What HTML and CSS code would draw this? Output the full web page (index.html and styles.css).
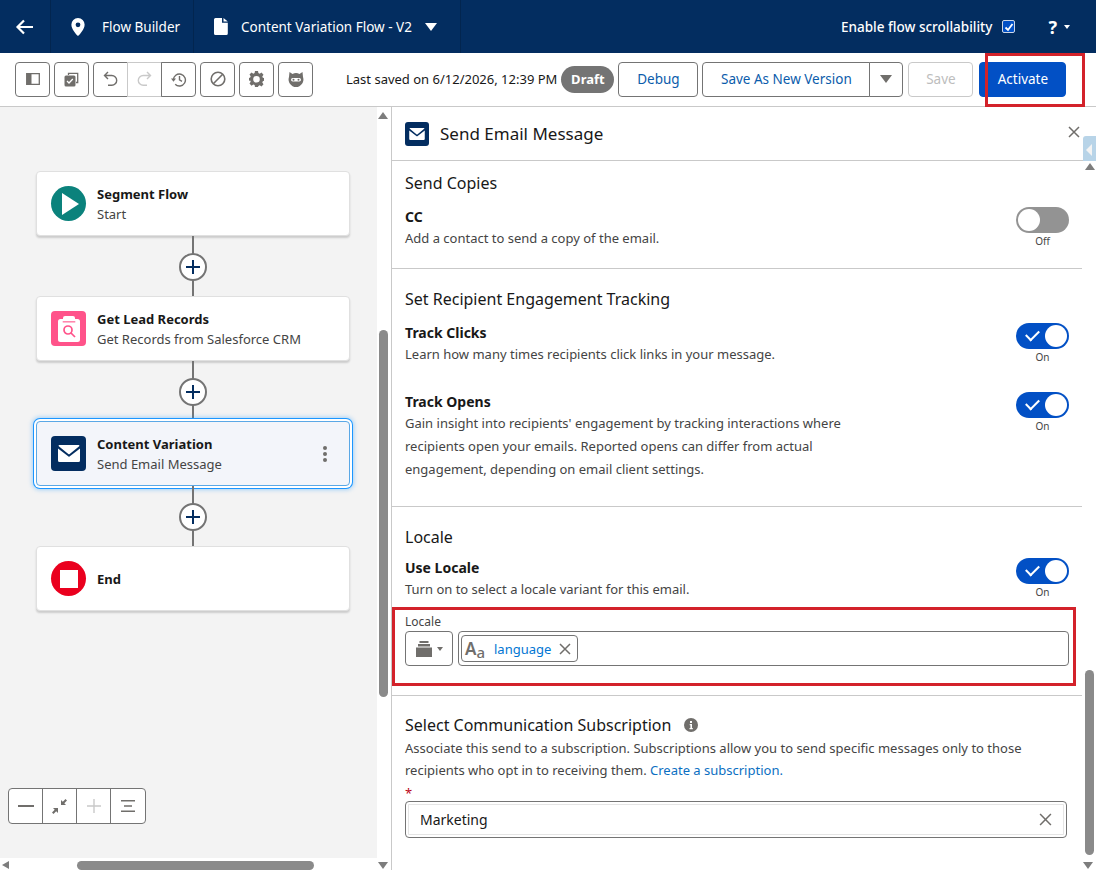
FILE: index.html
```html
<!DOCTYPE html>
<html lang="en">
<head>
  <meta charset="UTF-8">
  <title>Flow Builder</title>
  <link rel="stylesheet" href="styles.css">
</head>
<body>
  <header class="topbar">
    <div class="nav-cell nav-back">
      <svg width="20" height="20" viewBox="0 0 20 20" fill="none" stroke="#fff" stroke-width="2.2"><path d="M18 10H2.5M9 3.5 2.5 10 9 16.5"/></svg>
    </div>
    <div class="nav-cell nav-app">
      <svg width="14" height="18" viewBox="0 0 14 18"><path fill="#fff" fill-rule="evenodd" d="M7 0a6.6 6.6 0 0 0-6.6 6.7C.4 11 5 16.200 7 18c2-1.800 6.600-7 6.600-11.300A6.600 6.600 0 0 0 7 0Zm0 4.400a2.400 2.400 0 1 1 0 4.800 2.400 2.400 0 0 1 0-4.800Z"/></svg>
      <span>Flow Builder</span>
    </div>
    <div class="nav-cell nav-doc">
      <svg width="14" height="17" viewBox="0 0 14 17"><path fill="#fff" d="M1.500 0H8v4.800h5.800V15.500a1.500 1.500 0 0 1-1.500 1.500H1.500A1.500 1.500 0 0 1 0 15.500v-14A1.500 1.500 0 0 1 1.500 0ZM9.500 0l4.300 3.400H9.500Z"/></svg>
      <span>Content Variation Flow - V2</span>
      <i class="caret caret-white"></i>
    </div>
    <div class="nav-right">
      <span class="scroll-label">Enable flow scrollability</span>
      <span class="checkbox">
        <svg width="10" height="10" viewBox="0 0 10 10" fill="none" stroke="#fff" stroke-width="1.800"><path d="M1.500 5.500 4 8l4.500-6"/></svg>
      </span>
      <span class="help">?</span>
      <i class="caret caret-small"></i>
    </div>
  </header>

  <div class="toolbar">
    <button class="tool">
      <svg width="14" height="12" viewBox="0 0 14 12"><path fill="none" stroke="#706e6b" stroke-width="1.300" d="M.7.700h12.600v10.600H.7z"/><path fill="#706e6b" d="M1 1h4.500v10H1z"/></svg>
    </button>
    <button class="tool">
      <svg width="15" height="15" viewBox="0 0 15 15"><path fill="none" stroke="#706e6b" stroke-width="1.300" d="M4.500 3V1.300h9.200v9.200H12"/><rect x=".5" y="3.500" width="11" height="11" rx="1.500" fill="#706e6b"/><path fill="none" stroke="#fff" stroke-width="1.300" d="m3 9 2 2 3.800-4"/></svg>
    </button>
    <div class="tool-group">
      <button class="tool">
        <svg width="15" height="16" viewBox="0 0 15 16" fill="none" stroke="#706e6b" stroke-width="1.400"><path d="M5 1 1.500 4.500 5 8M1.500 4.500h7.300a4.800 4.800 0 0 1 0 9.800H5"/></svg>
      </button>
      <button class="tool tool-off">
        <svg width="15" height="16" viewBox="0 0 15 16" fill="none" stroke="#c9c9c9" stroke-width="1.400"><path d="M10 1l3.500 3.500L10 8M13.500 4.500H6.200a4.800 4.800 0 0 0 0 9.800H10"/></svg>
      </button>
      <button class="tool">
        <svg width="16" height="15" viewBox="0 0 16 15" fill="none" stroke="#706e6b" stroke-width="1.400"><path d="M2.400 8a6 6 0 1 1 1.800 4.300"/><path d="M8.500 4v3.800l2.500 1.500"/><path fill="#706e6b" stroke="none" d="M0 6.500h5L2.500 9.800z"/></svg>
      </button>
    </div>
    <button class="tool">
      <svg width="16" height="16" viewBox="0 0 16 16" fill="none" stroke="#706e6b" stroke-width="1.600"><circle cx="8" cy="8" r="6.800"/><path d="M3.300 12.700 12.700 3.300"/></svg>
    </button>
    <button class="tool">
      <svg width="15" height="16" viewBox="0 0 15 16"><path fill="#706e6b" fill-rule="evenodd" d="M6 0h3l.4 2.100 1.300.6L12.500 1.500l2 2.200-1.200 1.800.5 1.300L15 7v2.800l-1.200.4-.5 1.300 1.200 1.800-2 2.200-1.800-1.200-1.300.6L9 16H6l-.4-1.900-1.300-.6-1.800 1.200-2-2.200 1.200-1.800-.5-1.300L0 9.800V7l1.200-.4.500-1.300L.5 3.500l2-2L4.300 2.700l1.300-.6ZM7.500 5a3.300 3.300 0 1 0 0 6.600 3.300 3.300 0 0 0 0-6.600Z"/></svg>
    </button>
    <button class="tool">
      <svg width="16" height="15" viewBox="0 0 16 15"><path fill="#706e6b" d="M1.500 0 4.500 2A7.500 7.500 0 0 1 11.500 2L14.500 0l.5 5A7.500 7.500 0 0 1 8 15 7.500 7.500 0 0 1 1 5Z"/><rect x="3" y="6" width="10" height="3.500" rx="1.700" fill="#fff"/><circle cx="5.500" cy="7.700" r="1" fill="#706e6b"/><circle cx="10.500" cy="7.700" r="1" fill="#706e6b"/></svg>
    </button>

    <span class="last-saved">Last saved on 6/12/2026, 12:39 PM</span>
    <span class="draft-pill">Draft</span>
    <button class="btn btn-debug">Debug</button>
    <div class="btn-split">
      <button class="btn btn-version">Save As New Version</button>
      <button class="btn btn-more"><i class="caret caret-grey"></i></button>
    </div>
    <button class="btn btn-save">Save</button>
    <button class="btn btn-activate">Activate</button>
  </div>

  <main class="workspace">
    <section class="canvas">
      <div class="canvas-area">
        <div class="flow">
          <div class="node">
            <span class="node-icon icon-start">
              <svg width="18" height="22" viewBox="0 0 18 22"><path fill="#fff" d="M1 0v22l17-11z"/></svg>
            </span>
            <div class="node-text">
              <div class="node-title">Segment Flow</div>
              <div class="node-sub">Start</div>
            </div>
          </div>
          <div class="connector"><span class="add-btn"></span></div>
          <div class="node">
            <span class="node-icon icon-get">
              <svg width="22" height="26" viewBox="0 0 22 26"><path fill="#fff" fill-rule="evenodd" d="M7 0h8a2 2 0 0 1 2 2v1h2.500A2.500 2.500 0 0 1 22 5.500v18a2.500 2.500 0 0 1-2.500 2.500h-17A2.500 2.500 0 0 1 0 23.500v-18A2.500 2.500 0 0 1 2.500 3H5V2a2 2 0 0 1 2-2Z"/><path fill="#ff538a" d="M4.700 5.300h12.600v1.100H4.700z"/><g fill="none" stroke="#ff538a" stroke-width="1.700"><circle cx="10" cy="14" r="4"/><path d="m13 17 4 4"/></g></svg>
            </span>
            <div class="node-text">
              <div class="node-title">Get Lead Records</div>
              <div class="node-sub">Get Records from Salesforce CRM</div>
            </div>
          </div>
          <div class="connector"><span class="add-btn"></span></div>
          <div class="node node-active">
            <span class="node-icon icon-mail">
              <svg width="22" height="17" viewBox="0 0 22 17"><path fill="#fff" d="M0 3.400V15.500A1.500 1.500 0 0 0 1.500 17h19a1.500 1.500 0 0 0 1.500-1.500V3.400L11.500 11.600a.8.800 0 0 1-1 0Z"/><path fill="#fff" d="M1.300 0h19.400c.7 0 1 .8.500 1.200L11.400 9.200a.7.700 0 0 1-.8 0L.8 1.200C.3.800.600 0 1.300 0Z"/></svg>
            </span>
            <div class="node-text">
              <div class="node-title">Content Variation</div>
              <div class="node-sub">Send Email Message</div>
            </div>
            <span class="kebab"><i></i><i></i><i></i></span>
          </div>
          <div class="connector"><span class="add-btn"></span></div>
          <div class="node">
            <span class="node-icon icon-end"><i></i></span>
            <div class="node-text">
              <div class="node-title">End</div>
            </div>
          </div>
        </div>
        <div class="zoom-ctrl">
          <button class="zoom-btn"><svg width="16" height="2" viewBox="0 0 16 2"><path fill="#706e6b" d="M0 0h16v2H0z"/></svg></button>
          <button class="zoom-btn"><svg width="15" height="15" viewBox="0 0 15 15"><path fill="#706e6b" d="M9 1v5h5L12.300 4.300 15 1.500 13.500 0l-2.700 2.700ZM6 14V9H1l1.700 1.700L0 13.500 1.500 15l2.700-2.700Z"/></svg></button>
          <button class="zoom-btn zoom-off"><svg width="14" height="14" viewBox="0 0 14 14"><path fill="#c9c9c9" d="M6.300 0h1.400v6.300H14v1.400H7.700V14H6.300V7.700H0V6.300h6.300z"/></svg></button>
          <button class="zoom-btn"><svg width="14" height="12" viewBox="0 0 14 12"><path fill="#706e6b" d="M0 0h14v1.600H0zM3 5.200h8v1.600H3zM0 10.400h14V12H0z"/></svg></button>
        </div>
      </div>
      <div class="v-scroll"><i class="arrow-up"></i><span class="v-thumb"></span></div>
      <div class="h-scroll"><i class="arrow-left"></i><span class="h-thumb"></span><i class="arrow-down"></i></div>
    </section>

    <section class="panel">
      <div class="panel-head">
        <span class="panel-icon">
          <svg width="16" height="12" viewBox="0 0 22 17"><path fill="#fff" d="M0 3.400V15.500A1.500 1.500 0 0 0 1.500 17h19a1.500 1.500 0 0 0 1.500-1.500V3.400L11.500 11.600a.8.800 0 0 1-1 0Z"/><path fill="#fff" d="M1.300 0h19.400c.7 0 1 .8.500 1.200L11.400 9.200a.7.700 0 0 1-.8 0L.8 1.200C.3.800.600 0 1.300 0Z"/></svg>
        </span>
        <h1 class="panel-title">Send Email Message</h1>
        <svg class="panel-close" width="12" height="12" viewBox="0 0 12 12" fill="none" stroke="#706e6b" stroke-width="1.500"><path d="m1 1 10 10M11 1 1 11"/></svg>
      </div>
      <div class="panel-tab"><i></i></div>

      <div class="panel-body">
        <div class="group group-copies">
          <h2 class="group-title">Send Copies</h2>
          <div class="opt opt-cc">
            <div class="opt-text">
              <div class="opt-title">CC</div>
              <p class="opt-desc">Add a contact to send a copy of the email.</p>
            </div>
            <div class="toggle-wrap"><span class="toggle"></span><span class="toggle-label">Off</span></div>
          </div>
        </div>

        <div class="group group-tracking">
          <h2 class="group-title">Set Recipient Engagement Tracking</h2>
          <div class="opt opt-clicks">
            <div class="opt-text">
              <div class="opt-title">Track Clicks</div>
              <p class="opt-desc">Learn how many times recipients click links in your message.</p>
            </div>
            <div class="toggle-wrap"><span class="toggle toggle-on"></span><span class="toggle-label">On</span></div>
          </div>
          <div class="opt opt-opens">
            <div class="opt-text">
              <div class="opt-title">Track Opens</div>
              <p class="opt-desc opt-desc-wrap">Gain insight into recipients' engagement by tracking interactions where recipients open your emails. Reported opens can differ from actual engagement, depending on email client settings.</p>
            </div>
            <div class="toggle-wrap"><span class="toggle toggle-on"></span><span class="toggle-label">On</span></div>
          </div>
        </div>

        <div class="group group-locale">
          <h2 class="group-title">Locale</h2>
          <div class="opt opt-locale">
            <div class="opt-text">
              <div class="opt-title">Use Locale</div>
              <p class="opt-desc">Turn on to select a locale variant for this email.</p>
            </div>
            <div class="toggle-wrap"><span class="toggle toggle-on"></span><span class="toggle-label">On</span></div>
          </div>
          <div class="locale-field">
            <div class="field-label">Locale</div>
            <div class="locale-row">
              <button class="res-picker">
                <svg width="16" height="16" viewBox="0 0 16 16"><path fill="#706e6b" d="M3.500 0h9v2h-9zM2 3h12v2.500H2zM0 6.500h16V16H0z"/></svg>
                <i class="caret caret-tiny"></i>
              </button>
              <div class="pill-input">
                <span class="pill">
                  <span class="pill-glyph"><b>A</b><em>a</em></span>
                  <a class="pill-text">language</a>
                  <svg width="12" height="12" viewBox="0 0 12 12" fill="none" stroke="#706e6b" stroke-width="1.500"><path d="m1 1 10 10M11 1 1 11"/></svg>
                </span>
              </div>
            </div>
          </div>
        </div>

        <div class="group group-sub">
          <h2 class="group-title">Select Communication Subscription
            <svg class="info" width="14" height="14" viewBox="0 0 14 14"><circle cx="7" cy="7" r="7" fill="#706e6b"/><path fill="#fff" d="M6 3h2v2H6zM5.700 6h2.300v4h.8v1.200H5.500V10h.9V7.200h-.7z"/></svg>
          </h2>
          <p class="opt-desc sub-desc">Associate this send to a subscription. Subscriptions allow you to send specific messages only to those recipients who opt in to receiving them. <a class="link">Create a subscription.</a></p>
          <div class="required">*</div>
          <div class="text-input">
            <span>Marketing</span>
            <svg width="13" height="13" viewBox="0 0 12 12" fill="none" stroke="#706e6b" stroke-width="1.400"><path d="m1 1 10 10M11 1 1 11"/></svg>
          </div>
        </div>
      </div>
      <div class="panel-scroll"><i class="arrow-up"></i><span class="panel-thumb"></span><i class="arrow-down"></i></div>
    </section>
  </main>

  <!-- red callouts drawn over the screenshot -->
  <div class="callout callout-activate"></div>
  <div class="callout callout-locale"></div>
</body>
</html>
```

FILE: styles.css
```css
:root {
  --navy: #032d60;
  --blue: #0b5cab;
  --brand: #0250c5;
  --link: #0176d3;
  --border: #747474;
  --line: #c9c9c9;
  --icon: #706e6b;
  --text: #181818;
  --muted: #444444;
  --font-family: "Noto Sans", "Open Sans", Arial, sans-serif;
}

* {
  margin: 0;
  padding: 0;
  box-sizing: border-box;
}

html, body {
  width: 1096px;
  height: 870px;
  overflow: hidden;
}

body {
  position: relative;
  display: flex;
  flex-direction: column;
  font-family: var(--font-family);
  font-size: 13px;
  color: var(--text);
  background: #fff;
}

button {
  font-family: inherit;
  background: #fff;
  cursor: pointer;
}

.caret {
  display: block;
  width: 0;
  height: 0;
  border-style: solid;
  border-color: transparent;
}

.caret-white {
  border-width: 8px 6.500px 0;
  border-top-color: #fff;
  margin-left: 13px;
}

.caret-small {
  border-width: 4px 3.500px 0;
  border-top-color: #fff;
  margin-left: 7px;
}

.caret-grey {
  border-width: 8px 6px 0;
  border-top-color: var(--icon);
}

.caret-tiny {
  border-width: 4px 3.500px 0;
  border-top-color: var(--icon);
}

/* top bar */
.topbar {
  display: flex;
  align-items: stretch;
  flex: none;
  height: 53px;
  background: var(--navy);
  color: #fff;
  font-size: 13.500px;
}

.nav-cell {
  display: flex;
  align-items: center;
  border-right: 1px solid #02254f;
}

.nav-back {
  width: 51px;
  padding-left: 15px;
}

.nav-app {
  width: 143px;
  padding-left: 20px;
  gap: 17px;
}

.nav-doc {
  width: 267px;
  padding-left: 20px;
  gap: 13px;
}

.nav-doc .caret {
  margin-left: 0;
}

.nav-right {
  display: flex;
  align-items: center;
  margin-left: auto;
  padding-right: 26px;
}

.scroll-label {
  font-weight: 500;
  font-size: 13.500px;
}

.checkbox {
  display: flex;
  align-items: center;
  justify-content: center;
  width: 13px;
  height: 13px;
  margin-left: 10px;
  background: var(--brand);
  border: 1px solid #cfd8e6;
  border-radius: 2px;
}

.help {
  margin-left: 33px;
  font-size: 18px;
  font-weight: 700;
}

/* tool bar */
.toolbar {
  display: flex;
  align-items: center;
  flex: none;
  height: 54px;
  padding: 0 0 1px 15px;
  border-bottom: 1px solid var(--line);
  background: #fff;
}

.tool {
  display: flex;
  align-items: center;
  justify-content: center;
  width: 35px;
  height: 35px;
  margin-right: 4px;
  border: 1px solid var(--border);
  border-radius: 4px;
}

.tool-group {
  display: flex;
  margin-right: 4px;
}

.tool-group .tool {
  width: 35px;
  margin: 0 -1px 0 0;
  border-radius: 0;
}

.tool-group .tool:first-child {
  border-radius: 4px 0 0 4px;
}

.tool-group .tool:last-child {
  margin-right: 0;
  border-radius: 0 4px 4px 0;
}

.tool-group .tool-off {
  border-color: var(--line);
  border-left-color: var(--line);
  border-right-color: var(--border);
}

.last-saved {
  margin-left: 29px;
  font-size: 13px;
  color: var(--text);
  white-space: nowrap;
}

.draft-pill {
  display: flex;
  align-items: center;
  justify-content: center;
  width: 53px;
  height: 27px;
  margin-left: 4px;
  border-radius: 14px;
  background: #747474;
  color: #fff;
  font-size: 13px;
  font-weight: 700;
}

.btn {
  height: 35px;
  border: 1px solid var(--border);
  border-radius: 4px;
  font-size: 13.500px;
  color: var(--blue);
}

.btn-debug {
  width: 80px;
  margin-left: 4px;
}

.btn-split {
  display: flex;
  margin-left: 4px;
}

.btn-version {
  width: 168px;
  border-radius: 4px 0 0 4px;
}

.btn-more {
  display: flex;
  align-items: center;
  justify-content: center;
  width: 34px;
  margin-left: -1px;
  border-radius: 0 4px 4px 0;
}

.btn-save {
  width: 65px;
  margin-left: 5px;
  border-color: var(--line);
  color: #bdbdbd;
}

.btn-activate {
  width: 87px;
  margin-left: 6px;
  border-color: var(--brand);
  background: var(--brand);
  color: #fff;
}

/* layout below the bars */
.workspace {
  display: flex;
  flex: 1;
  min-height: 0;
}

.canvas {
  position: relative;
  flex: none;
  width: 392px;
  border-right: 1px solid var(--line);
  background: #fff;
}

.canvas-area {
  position: relative;
  width: 377px;
  height: 751px;
  padding: 64px 0 0 36px;
  background: #f3f3f3;
}

.flow {
  display: flex;
  flex-direction: column;
  width: 314px;
}

.node {
  display: flex;
  align-items: center;
  gap: 11px;
  height: 65px;
  padding: 0 14px;
  background: #fff;
  border: 1px solid #e0e0e0;
  border-radius: 4px;
  box-shadow: 0 2px 2px rgba(0, 0, 0, 0.16);
}

.node-active {
  position: relative;
  background: #f3f5fa;
  border: 1px solid #5aa8e6;
  box-shadow: 0 0 0 2px #fff, 0 0 0 3px #1b96ff, 0 0 4px 4px rgba(27, 150, 255, 0.35);
}

.node-icon {
  display: flex;
  align-items: center;
  justify-content: center;
  flex: none;
  width: 35px;
  height: 35px;
  border-radius: 4px;
}

.icon-start {
  border-radius: 50%;
  background: #0b827c;
}

.icon-start svg {
  margin-left: 3px;
}

.icon-get {
  background: #ff538a;
}

.icon-mail {
  background: var(--navy);
}

.icon-end {
  border-radius: 50%;
  background: #ea001e;
}

.icon-end i {
  width: 18px;
  height: 18px;
  background: #fff;
}

.node-title {
  font-size: 13px;
  font-weight: 700;
  line-height: 20px;
}

.node-sub {
  font-size: 13px;
  line-height: 20px;
  color: var(--muted);
}

.kebab {
  display: flex;
  flex-direction: column;
  gap: 2px;
  margin-left: auto;
  margin-right: 8px;
}

.kebab i {
  width: 4px;
  height: 4px;
  border-radius: 50%;
  background: var(--icon);
}

.connector {
  position: relative;
  align-self: center;
  width: 2px;
  height: 60px;
  background: #747474;
}

.add-btn {
  position: absolute;
  top: 17px;
  left: -13px;
  width: 28px;
  height: 28px;
  border: 2px solid #747474;
  border-radius: 50%;
  background: #fff;
}

.add-btn::before,
.add-btn::after {
  content: "";
  position: absolute;
  background: var(--navy);
}

.add-btn::before {
  top: 5px;
  left: 11px;
  width: 2px;
  height: 14px;
}

.add-btn::after {
  top: 11px;
  left: 5px;
  width: 14px;
  height: 2px;
}

.zoom-ctrl {
  position: absolute;
  left: 8px;
  bottom: 34px;
  display: flex;
  height: 36px;
  border: 1px solid var(--border);
  border-radius: 4px;
  background: #fff;
}

.zoom-btn {
  display: flex;
  align-items: center;
  justify-content: center;
  width: 34px;
  border: 0;
  border-right: 1px solid var(--border);
  background: transparent;
}

.zoom-btn:last-child {
  border-right: 0;
}

.zoom-off {
  border-right-color: var(--border);
}

.v-scroll {
  position: absolute;
  top: 0;
  right: 0;
  width: 14px;
  height: 751px;
  background: #fff;
}

.v-thumb {
  position: absolute;
  top: 223px;
  left: 2px;
  width: 9px;
  height: 367px;
  border-radius: 5px;
  background: #8a8a8a;
}

.arrow-up {
  position: absolute;
  top: 5px;
  left: 1px;
  width: 0;
  height: 0;
  border: solid transparent;
  border-width: 0 5px 7px;
  border-bottom-color: #7d7d7d;
}

.h-scroll {
  position: relative;
  width: 391px;
  height: 12px;
}

.h-thumb {
  position: absolute;
  top: 3px;
  left: 77px;
  width: 237px;
  height: 9px;
  border-radius: 5px;
  background: #8a8a8a;
}

.arrow-left {
  position: absolute;
  top: 3px;
  left: 2px;
  width: 0;
  height: 0;
  border: solid transparent;
  border-width: 4px 7px 4px 0;
  border-right-color: #7d7d7d;
}

.arrow-down {
  position: absolute;
  bottom: 1px;
  right: 3px;
  width: 0;
  height: 0;
  border: solid transparent;
  border-width: 7px 5px 0;
  border-top-color: #7d7d7d;
}

/* right hand panel */
.panel {
  position: relative;
  flex: 1;
  min-width: 0;
}

.panel-head {
  display: flex;
  align-items: center;
  gap: 11px;
  width: 100%;
  height: 54px;
  padding: 0 0 0 13px;
  border-bottom: 1px solid var(--line);
}

.panel-icon {
  display: flex;
  align-items: center;
  justify-content: center;
  width: 24px;
  height: 24px;
  border-radius: 3px;
  background: var(--navy);
}

.panel-title {
  font-size: 17px;
  font-weight: 400;
}

.panel-close {
  position: absolute;
  top: 19px;
  right: 16px;
}

.panel-tab {
  position: absolute;
  top: 29px;
  right: 0;
  width: 13px;
  height: 29px;
  border-radius: 3px 0 0 3px;
  background: #b8d4e8;
}

.panel-tab i {
  position: absolute;
  top: 8px;
  left: 3px;
  border: solid transparent;
  border-width: 6px 6px 6px 0;
  border-right-color: #f3f3f3;
}

.panel-body {
  width: 690px;
}

.group {
  padding-left: 13px;
  border-bottom: 1px solid var(--line);
}

.group-copies {
  height: 108px;
  padding-top: 11px;
}

.group-tracking {
  height: 238px;
  padding-top: 19px;
}

.group-locale {
  height: 189px;
  padding-top: 19px;
}

.group-sub {
  padding-top: 18px;
  border-bottom: 0;
}

.group-title {
  font-size: 16px;
  font-weight: 400;
  line-height: 22px;
}

.opt {
  display: flex;
  justify-content: space-between;
  padding-right: 13px;
}

.opt-cc {
  margin-top: 13px;
}

.opt-clicks {
  margin-top: 13px;
}

.opt-opens {
  margin-top: 26px;
}

.opt-locale {
  margin-top: 10px;
}

.opt-title {
  font-size: 14px;
  font-weight: 700;
  line-height: 20px;
}

.opt-desc {
  font-size: 13px;
  line-height: 23px;
  color: var(--muted);
}

.opt-desc-wrap {
  width: 450px;
}

.toggle-wrap {
  display: flex;
  flex-direction: column;
  align-items: center;
  width: 53px;
}

.toggle {
  position: relative;
  width: 53px;
  height: 26px;
  border-radius: 13px;
  background: #939393;
}

.toggle::before {
  content: "";
  position: absolute;
  top: 2px;
  left: 2px;
  width: 22px;
  height: 22px;
  border-radius: 50%;
  background: #fff;
}

.toggle-on {
  background: var(--brand);
}

.toggle-on::before {
  left: 29px;
}

.toggle-on::after {
  content: "";
  position: absolute;
  top: 7px;
  left: 10px;
  width: 11px;
  height: 6px;
  border-left: 2px solid #fff;
  border-bottom: 2px solid #fff;
  transform: rotate(-45deg);
}

.toggle-label {
  margin-top: 1px;
  font-size: 10px;
  line-height: 15px;
  color: var(--muted);
}

.locale-field {
  margin-top: 12px;
}

.field-label {
  font-size: 12px;
  line-height: 18px;
  color: var(--muted);
}

.locale-row {
  display: flex;
  gap: 5px;
  padding-right: 13px;
}

.res-picker {
  display: flex;
  align-items: center;
  justify-content: center;
  gap: 5px;
  flex: none;
  width: 48px;
  height: 35px;
  border: 1px solid var(--border);
  border-radius: 4px;
}

.pill-input {
  display: flex;
  align-items: center;
  flex: 1;
  height: 35px;
  padding-left: 2px;
  border: 1px solid var(--border);
  border-radius: 4px;
}

.pill {
  display: flex;
  align-items: center;
  height: 27px;
  padding: 0 6px 0 3px;
  border: 1px solid var(--border);
  border-radius: 4px;
}

.pill-glyph {
  display: flex;
  align-items: flex-end;
  width: 24px;
  color: var(--icon);
  line-height: 1;
}

.pill-glyph b {
  font-size: 17px;
  font-weight: 600;
}

.pill-glyph em {
  font-size: 15px;
  font-style: normal;
  font-weight: 500;
  margin-bottom: -3px;
}

.pill-text {
  margin: 0 8px 0 5px;
  font-size: 13px;
  color: var(--link);
}

.info {
  margin-left: 8px;
  vertical-align: -1px;
}

.sub-desc {
  width: 660px;
  margin-top: 1px;
  line-height: 22px;
}

.link {
  color: #0b6fc2;
}

.required {
  height: 14px;
  margin-top: 5px;
  font-size: 13px;
  line-height: 14px;
  color: #ba0517;
}

.text-input {
  display: flex;
  align-items: center;
  justify-content: space-between;
  width: 662px;
  height: 37px;
  margin-top: 1px;
  padding: 0 14px;
  border: 1px solid var(--border);
  border-radius: 4px;
  box-shadow: inset 0 0 0 2px #fff, inset 0 0 0 3px #e5e5e5;
  font-size: 14px;
}

.panel-scroll {
  position: absolute;
  top: 54px;
  right: 0;
  bottom: 0;
  width: 14px;
  background: #fff;
}

.panel-thumb {
  position: absolute;
  top: 509px;
  left: 3px;
  width: 9px;
  height: 185px;
  border-radius: 5px;
  background: #8a8a8a;
}

.panel-scroll .arrow-up {
  top: 2px;
  left: 3px;
}

/* annotations */
.callout {
  position: absolute;
  border: 3px solid #d3222a;
}

.callout-activate {
  top: 53px;
  left: 985px;
  width: 100px;
  height: 54px;
}

.callout-locale {
  top: 607px;
  left: 392px;
  width: 684px;
  height: 79px;
}
```
